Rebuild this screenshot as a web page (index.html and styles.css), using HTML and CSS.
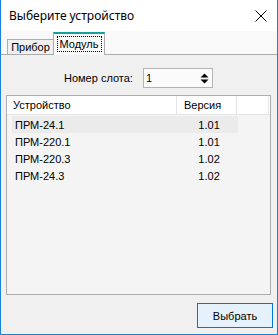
FILE: index.html
```html
<!DOCTYPE html>
<html>
<head>
<meta charset="utf-8">
<link rel="stylesheet" href="styles.css">
</head>
<body>
<div class="window">
  <div class="titlebar">
    <span class="title">Выберите устройство</span>
    <svg class="close" width="12" height="12" viewBox="0 0 12 12"><path d="M0.5 0.5 L11.5 11.5 M11.5 0.5 L0.5 11.5" stroke="#000" stroke-width="1" fill="none"/></svg>
  </div>
  <div class="tabstrip">
    <div class="tab">Прибор</div>
    <div class="tab active"><span class="focus">Модуль</span></div>
  </div>
  <div class="tabpage">
    <div class="slotrow">
      <label class="slotlabel">Номер слота:</label>
      <div class="spin">
        <span class="spinval">1</span>
        <svg class="arrows" width="9" height="12" viewBox="0 0 9 12"><path d="M0.5 4.5 L4.5 0.5 L8.5 4.5 Z M0.5 6.5 L8.5 6.5 L4.5 10.5 Z" fill="#000"/></svg>
      </div>
    </div>
    <div class="listview">
      <div class="lvheader">
        <div class="hcol c1">Устройство</div>
        <div class="hcol c2">Версия</div>
        <div class="hcol c3"></div>
      </div>
      <div class="rows">
        <div class="row sel"><span class="cell c1">ПРМ-24.1</span><span class="cell c2">1.01</span></div>
        <div class="row"><span class="cell c1">ПРМ-220.1</span><span class="cell c2">1.01</span></div>
        <div class="row"><span class="cell c1">ПРМ-220.3</span><span class="cell c2">1.02</span></div>
        <div class="row"><span class="cell c1">ПРМ-24.3</span><span class="cell c2">1.02</span></div>
      </div>
    </div>
    <div class="footer">
      <button class="btn">Выбрать</button>
    </div>
  </div>
</div>
</body>
</html>
```

FILE: styles.css
```css
html, body {
  margin: 0;
  padding: 0;
  background: #f0f0f0;
}
.window {
  width: 278px;
  height: 335px;
  box-sizing: border-box;
  border-left: 1px solid #1883d7;
  border-right: 1px solid #1883d7;
  border-bottom: 1px solid #1883d7;
  display: flex;
  flex-direction: column;
  background: #f0f0f0;
  font-family: "Liberation Sans", Arial, sans-serif;
  font-size: 11px;
  color: #000;
  overflow: hidden;
}
.titlebar {
  height: 31px;
  flex: none;
  background: #fff;
  display: flex;
  align-items: center;
  padding-left: 8px;
  padding-right: 10px;
}
.title {
  font-family: "Noto Sans", "Open Sans", sans-serif;
  font-size: 12px;
  flex: 1;
  margin-top: -1px;
}
.close {
  display: block;
}
.tabstrip {
  flex: none;
  background: #f9f9f9;
  display: flex;
  align-items: flex-end;
  padding-left: 6px;
  border-bottom: 1px solid #acacac;
  box-sizing: border-box;
  height: 24px;
}
.tab {
  height: 15px;
  width: 47px;
  box-sizing: border-box;
  border: 1px solid #acacac;
  border-bottom: none;
  background: #f0f0f0;
  display: flex;
  align-items: center;
  justify-content: center;
  line-height: 13px;
  padding-top: 1px;
}
.tab.active {
  width: 52px;
  height: 23px;
  margin-bottom: -1px;
  margin-left: -1px;
  background: #fafafa;
  border-top: 2px solid #16a09c;
  border-left: 1px solid #acacac;
  border-right: 1px solid #acacac;
  align-items: flex-start;
  padding-top: 3px;
}
.focus {
  outline: 1px dotted #000;
  padding: 1px 2px 0 2px;
  line-height: 13px;
}
.tabpage {
  flex: 1;
  display: flex;
  flex-direction: column;
  padding-left: 5px;
}
.slotrow {
  display: flex;
  align-items: center;
  margin-top: 13px;
  height: 20px;
  padding-left: 58px;
}
.slotlabel {
  width: 79px;
}
.spin {
  width: 70px;
  height: 20px;
  box-sizing: border-box;
  border: 1px solid #b4b4b4;
  background: #fbfbfb;
  display: flex;
  align-items: center;
  padding-left: 2px;
  padding-right: 3px;
}
.spinval {
  flex: 1;
  color: #100818;
}
.arrows {
  display: block;
  margin-top: 1px;
}
.listview {
  margin-top: 7px;
  width: 265px;
  height: 200px;
  box-sizing: border-box;
  border: 1px solid #adadad;
  background: #f4f4f4;
  display: flex;
  flex-direction: column;
}
.lvheader {
  height: 19px;
  flex: none;
  display: flex;
  background: #fff;
  border-bottom: 1px solid #e5e5e5;
  box-sizing: border-box;
}
.hcol {
  box-sizing: border-box;
  border-right: 1px solid #e5e5e5;
  display: flex;
  align-items: center;
}
.hcol.c1 { width: 170px; padding-left: 6px; }
.hcol.c2 { width: 60px; padding-left: 7px; }
.hcol.c3 { width: 32px; }
.rows {
  padding-top: 1px;
  padding-left: 5px;
}
.row {
  height: 17px;
  width: 226px;
  display: flex;
  align-items: center;
}
.row.sel {
  background: #ebebeb;
}
.cell.c1 {
  width: 185px;
  padding-left: 3px;
}
.cell.c2 {
  width: 40px;
}
.footer {
  display: flex;
  justify-content: flex-end;
  padding-top: 8px;
  padding-right: 4px;
}
.btn {
  width: 76px;
  height: 25px;
  box-sizing: border-box;
  border: 1px solid #0078d7;
  background: #e5f1fb;
  font-family: "Liberation Sans", Arial, sans-serif;
  font-size: 11px;
  color: #000;
  padding: 0;
  margin: 0;
}
```
